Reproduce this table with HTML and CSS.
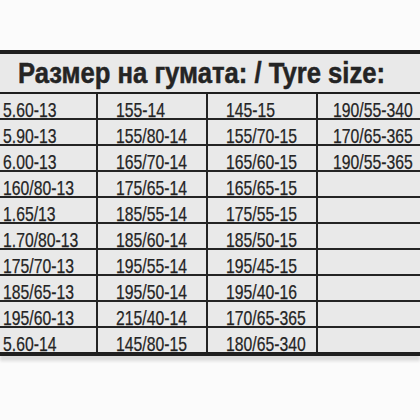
FILE: index.html
```html
<!DOCTYPE html>
<html lang="bg">
<head>
<meta charset="utf-8">
<title>Размер на гумата</title>
<link rel="stylesheet" href="styles.css">
</head>
<body>
<div class="page">
  <div class="label">
    <div class="title"><span class="t">Размер на гумата: / Tyre size:</span></div>
    <div class="grid">
      <div class="c c1"><span>5.60-13</span></div><div class="c c2"><span>155-14</span></div><div class="c c3"><span>145-15</span></div><div class="c c4"><span>190/55-340</span></div>
      <div class="c c1"><span>5.90-13</span></div><div class="c c2"><span>155/80-14</span></div><div class="c c3"><span>155/70-15</span></div><div class="c c4"><span>170/65-365</span></div>
      <div class="c c1"><span>6.00-13</span></div><div class="c c2"><span>165/70-14</span></div><div class="c c3"><span>165/60-15</span></div><div class="c c4"><span>190/55-365</span></div>
      <div class="c c1"><span>160/80-13</span></div><div class="c c2"><span>175/65-14</span></div><div class="c c3"><span>165/65-15</span></div><div class="c c4"></div>
      <div class="c c1"><span>1.65/13</span></div><div class="c c2"><span>185/55-14</span></div><div class="c c3"><span>175/55-15</span></div><div class="c c4"></div>
      <div class="c c1"><span>1.70/80-13</span></div><div class="c c2"><span>185/60-14</span></div><div class="c c3"><span>185/50-15</span></div><div class="c c4"></div>
      <div class="c c1"><span>175/70-13</span></div><div class="c c2"><span>195/55-14</span></div><div class="c c3"><span>195/45-15</span></div><div class="c c4"></div>
      <div class="c c1"><span>185/65-13</span></div><div class="c c2"><span>195/50-14</span></div><div class="c c3"><span>195/40-16</span></div><div class="c c4"></div>
      <div class="c c1"><span>195/60-13</span></div><div class="c c2"><span>215/40-14</span></div><div class="c c3"><span>170/65-365</span></div><div class="c c4"></div>
      <div class="c c1 last"><span>5.60-14</span></div><div class="c c2 last"><span>145/80-15</span></div><div class="c c3 last"><span>180/65-340</span></div><div class="c c4 last"></div>
    </div>
  </div>
</div>
</body>
</html>
```
FILE: styles.css
```css
html, body {
  margin: 0;
  padding: 0;
  background: #fbfbfb;
}
.page {
  width: 420px;
  height: 420px;
  padding-top: 50px;
  box-sizing: border-box;
  overflow: hidden;
  background: #fbfbfb;
}
.label {
  background: #e9e9e9;
  border-top: 4px solid #1f1f1f;
  border-bottom: 4px solid #1f1f1f;
  box-shadow: 0 5px 3px #dcdcdc;
  color: #242424;
  font-family: "Liberation Sans", "Noto Sans", sans-serif;
}
.title {
  height: 40px;
  box-sizing: border-box;
  border-bottom: 2px solid #1f1f1f;
  padding-left: 18px;
  white-space: nowrap;
  display: flex;
  align-items: flex-end;
}
.t {
  display: inline-block;
  font-size: 30px;
  font-weight: bold;
  line-height: 20px;
  padding-bottom: 9px;
  -webkit-text-stroke: 0.5px #242424;
  transform: scaleX(0.855);
  transform-origin: left bottom;
}
.grid {
  display: grid;
  grid-template-columns: 98px 110px 110px 1fr;
}
.c {
  height: 26px;
  box-sizing: border-box;
  border-bottom: 2px solid #242424;
  display: flex;
  align-items: flex-end;
  white-space: nowrap;
}
.c span {
  display: inline-block;
  font-size: 21px;
  line-height: 16px;
  -webkit-text-stroke: 0.25px #242424;
  transform: scaleX(0.75);
  transform-origin: left bottom;
}
.c1, .c2, .c3 {
  border-right: 2px solid #242424;
}
.c1 { padding-left: 3px; }
.c2 { padding-left: 18px; }
.c3 { padding-left: 18px; }
.c4 { padding-left: 15px; }
.c.last { border-bottom: none; height: 24px; }
```
